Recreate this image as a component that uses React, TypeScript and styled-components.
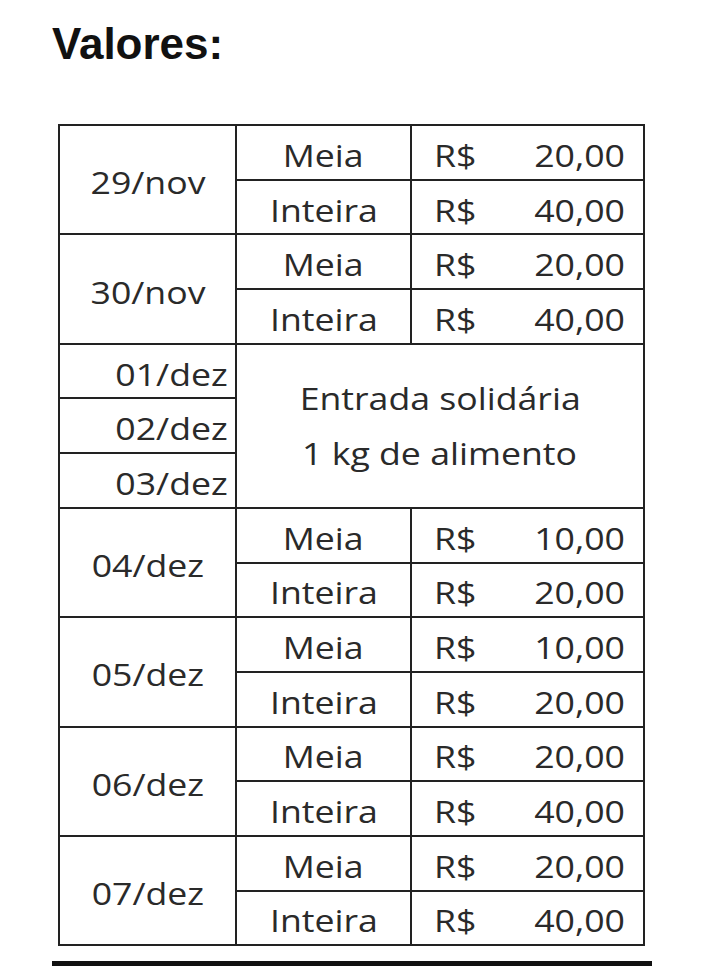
import styled, { createGlobalStyle } from "styled-components";

const GlobalStyle = createGlobalStyle`
  html, body {
    margin: 0;
    padding: 0;
    background: #ffffff;
  }
`;

const Page = styled.div`
  width: 723px;
  height: 977px;
  padding: 22px 0 0 52px;
  box-sizing: border-box;
  display: flex;
  flex-direction: column;
`;

const Title = styled.h1`
  margin: 0;
  font-family: "Liberation Sans", Arial, sans-serif;
  font-weight: 700;
  font-size: 44px;
  line-height: 44px;
  color: #111;
`;

const Table = styled.table`
  margin: 58px 0 0 6px;
  width: 585px;
  border-collapse: collapse;
  border: 2px solid #222;
  font-family: "Open Sans", "Noto Sans", sans-serif;
  font-size: 31px;
  color: #2a2a2a;
  table-layout: fixed;
`;

const Row = styled.tr`
  height: 54.7px;
`;

const Cell = styled.td<{ $align?: "left" | "center" | "right" }>`
  border: 2px solid #222;
  padding: 6px ${(p) => (p.$align === "right" ? "7px" : "0")} 0 0;
  text-align: ${(p) => p.$align ?? "center"};
  vertical-align: middle;
  line-height: 1;
  white-space: nowrap;
`;

// the source is a stretched spreadsheet capture: glyphs are wider than tall
const Text = styled.span<{ $origin?: "left" | "center" | "right" }>`
  display: inline-block;
  transform: scaleX(1.15);
  transform-origin: ${(p) => p.$origin ?? "center"};
`;

const Price = styled.div`
  display: flex;
  justify-content: space-between;
  padding: 0 18px 0 22px;
`;

const Solidary = styled.div`
  line-height: 55px;
  padding-bottom: 6px;
`;

const Rule = styled.div`
  margin-top: 15px;
  width: 600px;
  height: 4.5px;
  background: #111;
`;

type Day = { date: string; half: string; full: string };

const before: Day[] = [
  { date: "29/nov", half: "20,00", full: "40,00" },
  { date: "30/nov", half: "20,00", full: "40,00" },
];

const after: Day[] = [
  { date: "04/dez", half: "10,00", full: "20,00" },
  { date: "05/dez", half: "10,00", full: "20,00" },
  { date: "06/dez", half: "20,00", full: "40,00" },
  { date: "07/dez", half: "20,00", full: "40,00" },
];

function PriceCell({ value }: { value: string }) {
  return (
    <Cell>
      <Price>
        <Text $origin="left">R$</Text>
        <Text $origin="right">{value}</Text>
      </Price>
    </Cell>
  );
}

function DayRows({ day }: { day: Day }) {
  return (
    <>
      <Row>
        <Cell rowSpan={2}>
          <Text>{day.date}</Text>
        </Cell>
        <Cell>
          <Text>Meia</Text>
        </Cell>
        <PriceCell value={day.half} />
      </Row>
      <Row>
        <Cell>
          <Text>Inteira</Text>
        </Cell>
        <PriceCell value={day.full} />
      </Row>
    </>
  );
}

export default function App() {
  return (
    <>
      <GlobalStyle />
      <Page>
        <Title>Valores:</Title>
        <Table>
          <colgroup>
            <col style={{ width: 177 }} />
            <col style={{ width: 175 }} />
            <col style={{ width: 233 }} />
          </colgroup>
          <tbody>
            {before.map((d) => (
              <DayRows key={d.date} day={d} />
            ))}
            <Row>
              <Cell $align="right">
                <Text $origin="right">01/dez</Text>
              </Cell>
              <Cell colSpan={2} rowSpan={3}>
                <Solidary>
                  <Text>Entrada solidária</Text>
                  <br />
                  <Text>1 kg de alimento</Text>
                </Solidary>
              </Cell>
            </Row>
            <Row>
              <Cell $align="right">
                <Text $origin="right">02/dez</Text>
              </Cell>
            </Row>
            <Row>
              <Cell $align="right">
                <Text $origin="right">03/dez</Text>
              </Cell>
            </Row>
            {after.map((d) => (
              <DayRows key={d.date} day={d} />
            ))}
          </tbody>
        </Table>
        <Rule />
      </Page>
    </>
  );
}
